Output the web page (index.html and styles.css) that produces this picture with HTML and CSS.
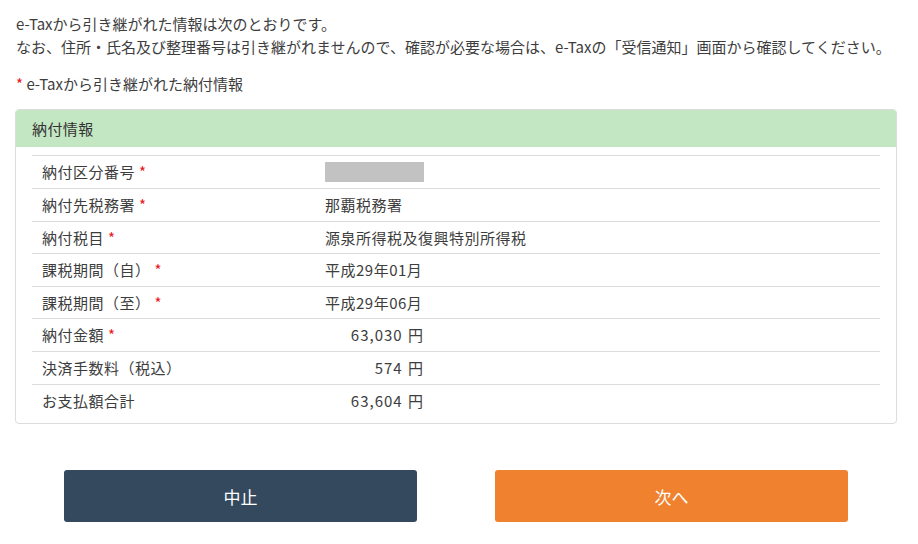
FILE: index.html
```html
<!DOCTYPE html>
<html lang="ja">
<head>
<meta charset="utf-8">
<link rel="stylesheet" href="styles.css">
</head>
<body>
<div class="page">
  <div class="intro">
    <p>e-Taxから引き継がれた情報は次のとおりです。<br>なお、住所・氏名及び整理番号は引き継がれませんので、確認が必要な場合は、e-Taxの「受信通知」画面から確認してください。</p>
  </div>
  <p class="note"><span class="req">*</span> e-Taxから引き継がれた納付情報</p>
  <div class="card">
    <div class="card-head">納付情報</div>
    <div class="card-body">
      <table class="info">
        <tr><td class="lbl">納付区分番号 <span class="req">*</span></td><td class="val"><div class="box"><span class="masked"></span></div></td><td></td></tr>
        <tr><td class="lbl">納付先税務署 <span class="req">*</span></td><td class="val"><div class="box">那覇税務署</div></td><td></td></tr>
        <tr><td class="lbl">納付税目 <span class="req">*</span></td><td class="val"><div class="box nowrap">源泉所得税及復興特別所得税</div></td><td></td></tr>
        <tr><td class="lbl">課税期間（自） <span class="req">*</span></td><td class="val"><div class="box">平成29年01月</div></td><td></td></tr>
        <tr><td class="lbl">課税期間（至） <span class="req">*</span></td><td class="val"><div class="box">平成29年06月</div></td><td></td></tr>
        <tr><td class="lbl">納付金額 <span class="req">*</span></td><td class="val"><div class="box num">63,030 円</div></td><td></td></tr>
        <tr><td class="lbl">決済手数料（税込）</td><td class="val"><div class="box num">574 円</div></td><td></td></tr>
        <tr><td class="lbl">お支払額合計</td><td class="val"><div class="box num">63,604 円</div></td><td></td></tr>
      </table>
    </div>
  </div>
  <div class="actions">
    <button class="btn btn-cancel">中止</button>
    <button class="btn btn-next">次へ</button>
  </div>
</div>
</body>
</html>
```
FILE: styles.css
```css
html, body {
  margin: 0;
  padding: 0;
  background: #fff;
}
body {
  font-family: "Noto Sans CJK JP", "Noto Sans", sans-serif;
  font-size: 15px;
  color: #3d3d3d;
}
.page {
  padding: 12px 21px 0 15px;
}
.intro p {
  margin: 0;
  line-height: 23px;
  padding-left: 1px;
}
.note {
  margin: 14px 0 0;
  line-height: 23px;
  padding-left: 1px;
}
.req {
  color: #e8141b;
}
.card {
  margin-top: 14px;
  border: 1px solid #dcdcdc;
  border-radius: 4px;
  overflow: hidden;
}
.card-head {
  background: #c3e7c3;
  padding: 0 16px;
  height: 37px;
  line-height: 37px;
  color: #333;
  letter-spacing: 0.4px;
}
.card-body {
  padding: 8px 16px 7px;
}
.info {
  width: 100%;
  border-collapse: collapse;
  letter-spacing: 0.5px;
}
.info td {
  padding: 6px 10px;
  line-height: 19.6px;
  border-top: 1px solid #dcdcdc;
  vertical-align: middle;
}
.info td.lbl {
  width: 263px;
  white-space: nowrap;
}
.info td.val {
  width: 100px;
  white-space: nowrap;
}
.box {
  width: 99px;
}
.box.num {
  text-align: right;
  letter-spacing: 1px;
  word-spacing: 1px;
}
.masked {
  display: block;
  width: 99px;
  height: 20px;
  background: #c2c2c2;
}
.actions {
  display: flex;
  justify-content: center;
  gap: 78px;
  margin-top: 46px;
}
.btn {
  width: 353px;
  height: 52px;
  border: none;
  border-radius: 3px;
  color: #fff;
  font-family: "Noto Sans CJK JP", "Noto Sans", sans-serif;
  font-size: 17px;
  cursor: pointer;
}
.btn-cancel {
  background: #34495e;
}
.btn-next {
  background: #f0812e;
}
```
